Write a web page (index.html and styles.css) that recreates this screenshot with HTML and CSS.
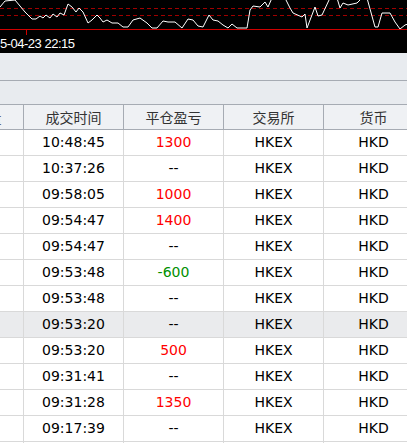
FILE: index.html
```html
<!DOCTYPE html>
<html>
<head>
<meta charset="utf-8">
<link rel="stylesheet" href="styles.css">
</head>
<body>
<div class="chart">
  <svg class="plot" width="407" height="37" viewBox="0 0 407 37">
    <line x1="0" y1="8.5" x2="407" y2="8.5" stroke="#a00000" stroke-width="1" stroke-dasharray="4 3"/>
    <line x1="0" y1="15.5" x2="407" y2="15.5" stroke="#a00000" stroke-width="1" stroke-dasharray="4 3"/>
    <polyline fill="none" stroke="#ffffff" stroke-width="1" points="0,7 5,1 15,0 25,12 32,19 36,19 40,16 43,18 46,15 50,18 53,14 57,17 60,13 64,15 68,4 72,7 76,12 79,8 83,12 88,23 92,20 97,15 100,18 103,22 107,20 112,23 118,23 123,27 128,27 133,20 140,18 147,23 152,28 157,28 163,21 168,22 175,22 182,28 188,19 193,20 198,26 203,27 209,15 213,20 218,21 223,25 228,28 232,24 237,28 247,28 250,10 253,6 260,7 265,2 268,7 272,-2 285,-2 290,8 293,13 302,17 305,14 307,28 315,7 318,16 322,15 330,-2 337,-2 340,8 343,3 348,5 357,3 362,-2 367,-2 375,27 378,27 382,13 390,13 395,22 400,29 405,25 408,24"/>
    <line x1="0" y1="29.5" x2="407" y2="29.5" stroke="#d00000" stroke-width="1"/>
    <line x1="26.5" y1="30" x2="26.5" y2="35" stroke="#d00000" stroke-width="1"/>
  </svg>
  <div class="stamp">5-04-23 22:15</div>
</div>
<div class="band band-top"></div>
<div class="band band-mid"></div>
<div class="grid">
  <div class="row head">
    <div class="cell">成交数量</div>
    <div class="cell">成交时间</div>
    <div class="cell">平仓盈亏</div>
    <div class="cell">交易所</div>
    <div class="cell">货币</div>
  </div>
  <div class="row"><div class="cell"></div><div class="cell">10:48:45</div><div class="cell up">1300</div><div class="cell">HKEX</div><div class="cell">HKD</div></div>
  <div class="row"><div class="cell"></div><div class="cell">10:37:26</div><div class="cell">--</div><div class="cell">HKEX</div><div class="cell">HKD</div></div>
  <div class="row"><div class="cell"></div><div class="cell">09:58:05</div><div class="cell up">1000</div><div class="cell">HKEX</div><div class="cell">HKD</div></div>
  <div class="row"><div class="cell"></div><div class="cell">09:54:47</div><div class="cell up">1400</div><div class="cell">HKEX</div><div class="cell">HKD</div></div>
  <div class="row"><div class="cell"></div><div class="cell">09:54:47</div><div class="cell">--</div><div class="cell">HKEX</div><div class="cell">HKD</div></div>
  <div class="row"><div class="cell"></div><div class="cell">09:53:48</div><div class="cell down">-600</div><div class="cell">HKEX</div><div class="cell">HKD</div></div>
  <div class="row"><div class="cell"></div><div class="cell">09:53:48</div><div class="cell">--</div><div class="cell">HKEX</div><div class="cell">HKD</div></div>
  <div class="row selected"><div class="cell"></div><div class="cell">09:53:20</div><div class="cell">--</div><div class="cell">HKEX</div><div class="cell">HKD</div></div>
  <div class="row"><div class="cell"></div><div class="cell">09:53:20</div><div class="cell up">500</div><div class="cell">HKEX</div><div class="cell">HKD</div></div>
  <div class="row"><div class="cell"></div><div class="cell">09:31:41</div><div class="cell">--</div><div class="cell">HKEX</div><div class="cell">HKD</div></div>
  <div class="row"><div class="cell"></div><div class="cell">09:31:28</div><div class="cell up">1350</div><div class="cell">HKEX</div><div class="cell">HKD</div></div>
  <div class="row"><div class="cell"></div><div class="cell">09:17:39</div><div class="cell">--</div><div class="cell">HKEX</div><div class="cell">HKD</div></div>
  <div class="row"><div class="cell"></div><div class="cell"></div><div class="cell"></div><div class="cell"></div><div class="cell"></div></div>
</div>
</body>
</html>
```
FILE: styles.css
```css
html, body {
  margin: 0;
  padding: 0;
  background: #ffffff;
  overflow: hidden;
}
body {
  width: 407px;
  height: 443px;
  font-family: "DejaVu Sans", "Noto Sans CJK SC", sans-serif;
}
.chart {
  height: 53px;
  background: #000000;
  overflow: hidden;
}
.plot {
  display: block;
}
.stamp {
  font-family: "Liberation Sans", Arial, sans-serif;
  font-size: 13px;
  letter-spacing: -0.5px;
  color: #ffffff;
  line-height: 14px;
  margin-top: 0px;
  white-space: nowrap;
}
.band {
  background: #e8ebef;
}
.band-top {
  height: 27px;
  border-bottom: 1px solid #a6abb3;
}
.band-mid {
  height: 23px;
}
.grid {
  margin-left: -76px;
  width: 500px;
}
.row {
  display: flex;
  height: 26px;
  box-sizing: border-box;
  border-bottom: 1px solid #d9d9d9;
}
.row.selected {
  background: #eaebed;
}
.cell {
  width: 100px;
  flex: none;
  box-sizing: border-box;
  border-right: 1px solid #d9d9d9;
  text-align: center;
  font-size: 14px;
  line-height: 25px;
  color: #000000;
  white-space: nowrap;
  overflow: hidden;
}
.head {
  background: #eff1f4;
  border-top: 1px solid #a6abb3;
  border-bottom: 1px solid #a6abb3;
  height: 26px;
}
.head .cell {
  border-right-color: #a6abb3;
  font-family: "Noto Sans CJK SC", sans-serif;
  color: #333333;
  line-height: 24px;
}
.up {
  color: #ff0000;
}
.down {
  color: #009000;
}
```
